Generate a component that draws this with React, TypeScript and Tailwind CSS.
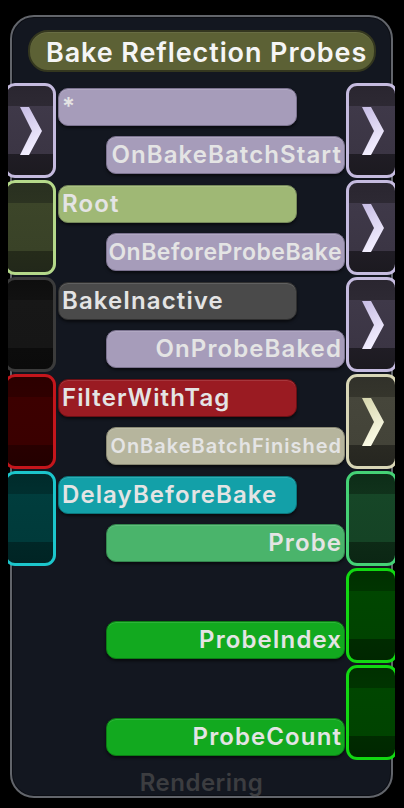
import React from "react";

type Tone = "purple" | "olive" | "black" | "red" | "cyan" | "beige" | "green" | "bright";
type Pill = "lavender" | "root" | "gray" | "red" | "beige" | "teal" | "green" | "bright";

// port frames: border colour + banded interior
const PORT: Record<Tone, string> = {
  purple:
    "border-[#c5bbdf] bg-[linear-gradient(180deg,#2a2630_0%,#2d2933_22%,#3f3949_22%,#3b3544_76%,#201d25_76%,#1c1a20_100%)]",
  olive:
    "border-[#b5d98a] bg-[linear-gradient(180deg,#293020_0%,#2c3321_22%,#3c4529_22%,#394227_76%,#252b1a_76%,#22281a_100%)]",
  black:
    "border-[#3b3b3b] bg-[linear-gradient(180deg,#0e0e0e_0%,#111111_22%,#171717_22%,#161616_76%,#0c0c0c_76%,#0b0b0b_100%)]",
  red:
    "border-[#c4161c] bg-[linear-gradient(180deg,#2c0000_0%,#2f0000_22%,#3c0000_22%,#3a0000_76%,#280000_76%,#240000_100%)]",
  cyan:
    "border-[#1cc6cc] bg-[linear-gradient(180deg,#002b2b_0%,#002f2f_22%,#003d3d_22%,#003a3a_76%,#002727_76%,#002424_100%)]",
  beige:
    "border-[#d8d6b6] bg-[linear-gradient(180deg,#31312a_0%,#35352c_22%,#46463b_22%,#434338_76%,#2a2a23_76%,#262620_100%)]",
  green:
    "border-[#45d276] bg-[linear-gradient(180deg,#0d2d18_0%,#10321b_22%,#164627_22%,#154325_76%,#0d2a16_76%,#0b2614_100%)]",
  bright:
    "border-[#12d812] bg-[linear-gradient(180deg,#003000_0%,#003400_22%,#004600_22%,#004300_76%,#002b00_76%,#002700_100%)]",
};

const PILL: Record<Pill, string> = {
  lavender: "bg-[#a69cba] border-[#7c7390]",
  root: "bg-[#9fb875] border-[#76895a]",
  gray: "bg-[#4a4a4a] border-[#2f2f2f]",
  red: "bg-[#9a1b22] border-[#6a0f14]",
  beige: "bg-[#b6b59d] border-[#8a8974]",
  teal: "bg-[#13a0a8] border-[#0b767c]",
  green: "bg-[#4ab46b] border-[#34874e]",
  bright: "bg-[#12a91f] border-[#0b7d14]",
};

interface Row {
  left?: { tone: Tone; chevron?: boolean };
  input?: { text: string; pill: Pill };
  output: { text: string; pill: Pill; size?: string };
  right: { tone: Tone; chevron?: boolean };
}

const rows: Row[] = [
  {
    left: { tone: "purple", chevron: true },
    input: { text: "*", pill: "lavender" },
    output: { text: "OnBakeBatchStart", pill: "lavender" },
    right: { tone: "purple", chevron: true },
  },
  {
    left: { tone: "olive" },
    input: { text: "Root", pill: "root" },
    output: { text: "OnBeforeProbeBake", pill: "lavender", size: "text-[23px] tracking-[0.5px]" },
    right: { tone: "purple", chevron: true },
  },
  {
    left: { tone: "black" },
    input: { text: "BakeInactive", pill: "gray" },
    output: { text: "OnProbeBaked", pill: "lavender" },
    right: { tone: "purple", chevron: true },
  },
  {
    left: { tone: "red" },
    input: { text: "FilterWithTag", pill: "red" },
    output: { text: "OnBakeBatchFinished", pill: "beige", size: "text-[20px] tracking-[1px]" },
    right: { tone: "beige", chevron: true },
  },
  {
    left: { tone: "cyan" },
    input: { text: "DelayBeforeBake", pill: "teal" },
    output: { text: "Probe", pill: "green" },
    right: { tone: "green" },
  },
  {
    output: { text: "ProbeIndex", pill: "bright" },
    right: { tone: "bright" },
  },
  {
    output: { text: "ProbeCount", pill: "bright" },
    right: { tone: "bright" },
  },
];

function Chevron({ beige }: { beige?: boolean }) {
  const id = beige ? "chev-beige" : "chev-purple";
  return (
    <svg width="23" height="48" viewBox="0 0 23 48">
      <defs>
        <linearGradient id={id} x1="0" y1="0" x2="0.3" y2="1">
          <stop offset="0" stopColor={beige ? "#d6d5ad" : "#c6bce4"} />
          <stop offset="1" stopColor={beige ? "#fbfbe6" : "#f3efff"} />
        </linearGradient>
      </defs>
      <polygon points="1,0 10,0 23,24 10,48 1,48 13,24" fill={`url(#${id})`} />
    </svg>
  );
}

function Port({ tone, chevron }: { tone: Tone; chevron?: boolean }) {
  return (
    <div className={`h-[95px] w-[52px] rounded-[11px] border-[3px] flex items-center pl-[12px] ${PORT[tone]}`}>
      {chevron && <Chevron beige={tone === "beige"} />}
    </div>
  );
}

function Label({ text, pill, align, size }: { text: string; pill: Pill; align: "left" | "right"; size?: string }) {
  return (
    <div
      className={`h-[38px] w-[239px] shrink-0 rounded-[10px] border flex items-center whitespace-nowrap overflow-hidden shadow-[0_2px_3px_rgba(0,0,0,0.55),inset_0_1px_0_rgba(255,255,255,0.12)] ${PILL[pill]} ${
        align === "right" ? "self-end justify-end pr-[2px]" : "justify-start pl-[3px]"
      }`}
    >
      <span className={`${size ?? "text-[24px] tracking-[1.1px]"} font-semibold text-[#e4e4e4] leading-none`}>{text}</span>
    </div>
  );
}

export default function App() {
  return (
    <div className="w-[404px] h-[808px] bg-black font-['Inter','Liberation_Sans',sans-serif]">
      <div className="ml-[8px] w-[387px] h-full overflow-hidden">
        <div className="ml-[2px] mt-[15px] w-[383px] h-[783px] rounded-[24px] border-2 border-[#62656b] bg-[#131720] shadow-[inset_0_0_0_1px_#0c0e14] flex flex-col">
          {/* title */}
          <div className="shrink-0 mt-[13px] ml-[16px] mr-[15px] h-[42px] rounded-[20px] border-2 border-[#34371f] bg-[#5c6135] shadow-[inset_0_1px_0_rgba(255,255,255,0.08)] flex items-center pl-[16px] pt-[3px]">
            <span className="text-[27px] tracking-[0.9px] font-semibold text-[#f5f5f5] leading-none whitespace-nowrap">
              Bake Reflection Probes
            </span>
          </div>

          {/* ports and labels */}
          <div className="shrink-0 mt-[11px] -ml-[8px] -mr-[7px] flex flex-col">
            {rows.map((row, i) => (
              <div key={i} className="shrink-0 h-[97px] flex">
                <div className="w-[52px]">{row.left && <Port tone={row.left.tone} chevron={row.left.chevron} />}</div>
                <div className="ml-[2px] w-[287px] flex flex-col pt-[5px] gap-[10px]">
                  {row.input ? (
                    <Label text={row.input.text} pill={row.input.pill} align="left" />
                  ) : (
                    <div className="h-[38px]" />
                  )}
                  <Label text={row.output.text} pill={row.output.pill} align="right" size={row.output.size} />
                </div>
                <div className="ml-[1px] w-[52px]">
                  <Port tone={row.right.tone} chevron={row.right.chevron} />
                </div>
              </div>
            ))}
          </div>

          <div className="pt-[8px] text-center text-[24px] tracking-[0.5px] leading-[26px] font-semibold text-[#3c3d40]">
            Rendering
          </div>
        </div>
      </div>
    </div>
  );
}
